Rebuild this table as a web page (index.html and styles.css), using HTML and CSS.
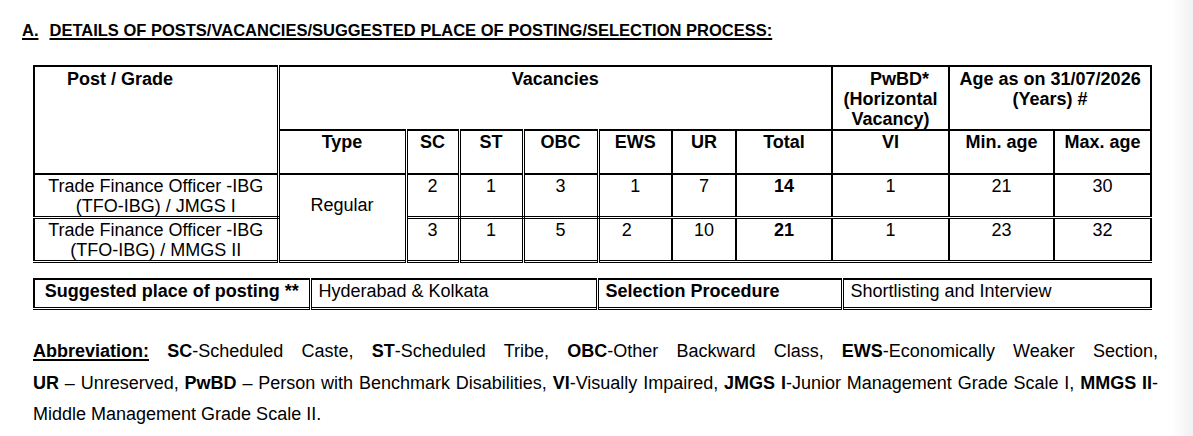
FILE: index.html
```html
<!DOCTYPE html>
<html lang="en">
<head>
<meta charset="utf-8">
<title>Details of posts</title>
<link rel="stylesheet" href="styles.css">
</head>
<body>
<div class="page">
  <h2 class="heading"><span class="ul">A.</span><span class="ul gap">DETAILS OF POSTS/VACANCIES/SUGGESTED PLACE OF POSTING/SELECTION PROCESS:</span></h2>

  <table class="posts">
    <colgroup>
      <col class="c-post"><col class="c-type"><col class="c-sc"><col class="c-st"><col class="c-obc"><col class="c-ews"><col class="c-ur"><col class="c-total"><col class="c-vi"><col class="c-min"><col class="c-max">
    </colgroup>
    <tr class="h1">
      <th rowspan="2" class="post-head dbl-r">Post / Grade</th>
      <th colspan="7" class="bb">Vacancies</th>
      <th class="bb"><span class="shift">PwBD*</span><br>(Horizontal<br>Vacancy)</th>
      <th colspan="2" class="bb">Age as on 31/07/2026<br>(Years) #</th>
    </tr>
    <tr class="h2">
      <th class="dbl-r">Type</th>
      <th class="dbl-r">SC</th>
      <th class="dbl-r">ST</th>
      <th class="dbl-r">OBC</th>
      <th>EWS</th>
      <th>UR</th>
      <th>Total</th>
      <th>VI</th>
      <th>Min. age</th>
      <th>Max. age</th>
    </tr>
    <tr class="d1">
      <td class="dbl-r dbl-b">Trade Finance Officer -IBG<br>(TFO-IBG) / JMGS I</td>
      <td rowspan="2" class="regular dbl-r">Regular</td>
      <td class="dbl-r dbl-b">2</td>
      <td class="dbl-r dbl-b">1</td>
      <td class="dbl-r dbl-b">3</td>
      <td class="dbl-b">1</td>
      <td class="dbl-b">7</td>
      <td class="dbl-b"><b>14</b></td>
      <td class="dbl-b">1</td>
      <td class="dbl-b">21</td>
      <td class="dbl-b">30</td>
    </tr>
    <tr class="d2">
      <td class="dbl-r">Trade Finance Officer -IBG<br>(TFO-IBG) / MMGS II</td>
      <td class="dbl-r">3</td>
      <td class="dbl-r">1</td>
      <td class="dbl-r">5</td>
      <td class="ews2">2</td>
      <td>10</td>
      <td><b>21</b></td>
      <td>1</td>
      <td>23</td>
      <td>32</td>
    </tr>
  </table>

  <table class="posting">
    <colgroup>
      <col class="p1"><col class="p2"><col class="p3"><col class="p4">
    </colgroup>
    <tr>
      <th class="center dbl-r">Suggested place of posting **</th>
      <td class="dbl-r">Hyderabad &amp; Kolkata</td>
      <th class="dbl-r">Selection Procedure</th>
      <td>Shortlisting and Interview</td>
    </tr>
  </table>

  <p class="abbr"><span class="line"><b class="ul">Abbreviation:</b> <b>SC</b>-Scheduled Caste, <b>ST</b>-Scheduled Tribe, <b>OBC</b>-Other Backward Class, <b>EWS</b>-Economically Weaker Section,</span><span class="line"><b>UR</b> – Unreserved, <b>PwBD</b> – Person with Benchmark Disabilities, <b>VI</b>-Visually Impaired, <b>JMGS I</b>-Junior Management Grade Scale I, <b>MMGS II</b>-</span>Middle Management Grade Scale II.</p>
</div>
</body>
</html>
```

FILE: styles.css
```css
html {
  background: linear-gradient(90deg, #ffffff 0, #ffffff 1172px, #f1f1f1 1193px);
  min-height: 100%;
}

body {
  margin: 0;
  font-family: "Liberation Sans", Arial, sans-serif;
  color: #000;
}

.page {
  padding-top: 20px;
}

.heading {
  margin: 0 0 0 22px;
  font-size: 16.5px;
  line-height: 20px;
  font-weight: bold;
}

.ul {
  text-decoration: underline;
  text-decoration-thickness: 1.5px;
  text-underline-offset: 2px;
}

.gap {
  margin-left: 11px;
}

table {
  border-collapse: collapse;
  table-layout: fixed;
  margin-left: 33px;
  font-size: 18px;
}

.posts {
  width: 1117px;
  margin-top: 25px;
  border: 2px solid #000;
  border-bottom: 3px double #000;
}

.c-post { width: 244px; }
.c-type { width: 128px; }
.c-sc { width: 53px; }
.c-st { width: 64px; }
.c-obc { width: 75px; }
.c-ews { width: 74px; }
.c-ur { width: 64px; }
.c-total { width: 96px; }
.c-vi { width: 117px; }
.c-min { width: 105px; }
.c-max { width: 97px; }

.posts th,
.posts td {
  border: 2px solid #000;
  padding: 1px 3px 0;
  vertical-align: top;
  text-align: center;
}

.posts th {
  font-weight: bold;
  line-height: 20px;
}

.posts td {
  font-weight: normal;
  line-height: 20px;
}

.posts .dbl-r { border-right: 3px double #000; }
.posts .dbl-b { border-bottom: 3px double #000; }

.h1 { height: 64px; }
.h2 { height: 44px; }
.d1 { height: 43px; }
.d2 { height: 44px; }

.posts .post-head {
  text-align: left;
  padding-left: 32px;
  padding-top: 2px;
}

.h1 th { padding-top: 2px; }

.shift {
  padding-left: 18px;
}

.posts .regular {
  padding-top: 20px;
}

.posts .ews2 {
  padding-right: 20px;
}

.posting {
  width: 1117px;
  margin-top: 15px;
  border-top: 2px solid #000;
  border-left: 2px solid #000;
  border-right: 2px solid #000;
  border-bottom: 3px double #000;
}

.p1 { width: 276px; }
.p2 { width: 287px; }
.p3 { width: 245px; }
.p4 { width: 309px; }

.posting th,
.posting td {
  border: 2px solid #000;
  height: 26px;
  padding: 1px 7px 0;
  line-height: 21px;
  text-align: left;
  vertical-align: top;
}

.posting th { font-weight: bold; }
.posting td { font-weight: normal; }
.posting .center { text-align: center; }
.posting .dbl-r { border-right: 3px double #000; }

.abbr {
  margin: 26px 0 0 33px;
  width: 1125px;
  font-size: 18px;
  line-height: 31.5px;
  text-align: justify;
}

.abbr .line {
  display: block;
  text-align: justify;
  text-align-last: justify;
}
```
